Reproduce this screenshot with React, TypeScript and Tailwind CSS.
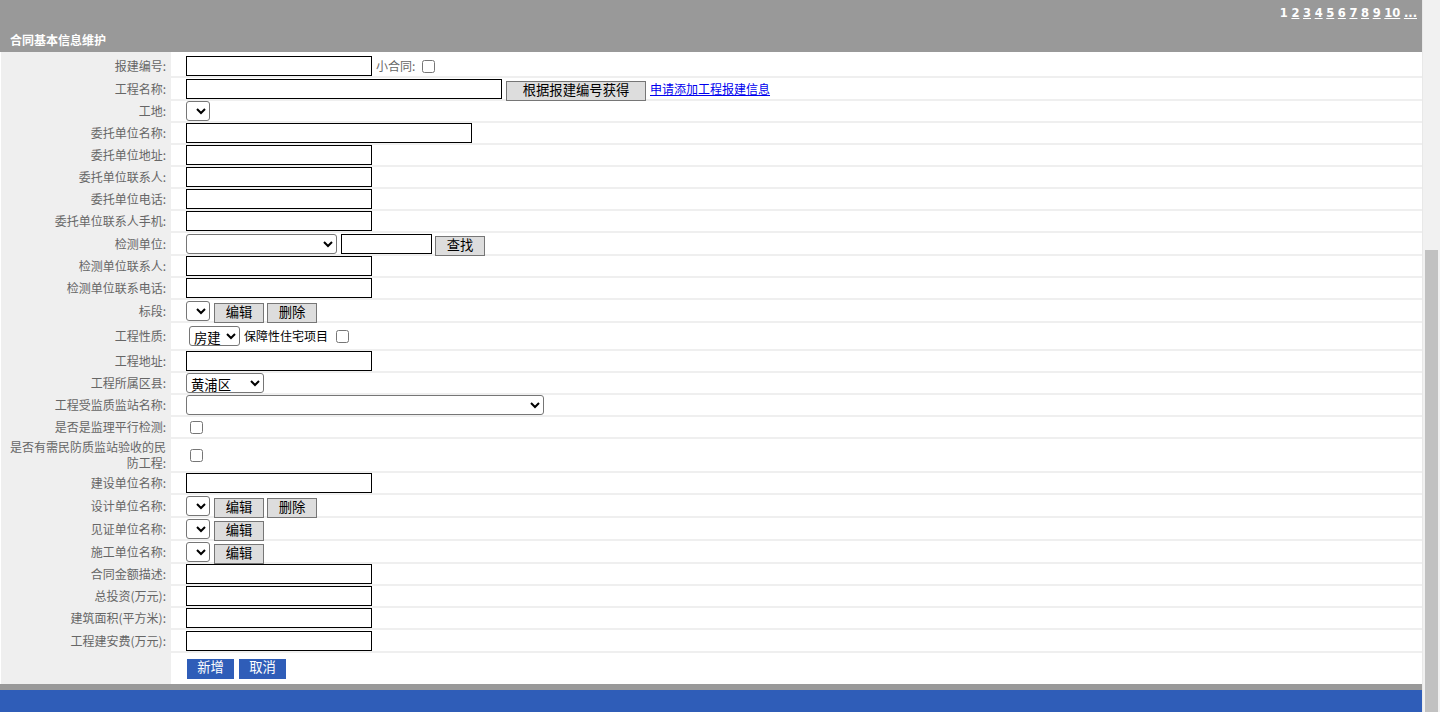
import type { ReactNode } from "react";

const cjk = "font-['Noto_Sans_CJK_SC','Noto_Sans',sans-serif]";

function TextBox({ w = "w-[186px]" }: { w?: string }) {
  return <input type="text" className={`h-[20px] ${w} border border-black bg-white px-[2px] text-[13.33px]`} />;
}

function Select({ w = "w-[24px]", children }: { w?: string; children?: ReactNode }) {
  return (
    <select className={`h-[20px] ${w} rounded-[3px] border border-[#767676] bg-white text-[13.33px] text-black`}>
      {children}
    </select>
  );
}

function GrayButton({ w = "w-[50px]", children }: { w?: string; children: ReactNode }) {
  return (
    <button className={`h-[20px] ${w} border border-[#767676] bg-[#dddddd] pb-[3px] text-[13.33px] leading-none text-black`}>
      {children}
    </button>
  );
}

function Check({ ml = "ml-[4px]" }: { ml?: string }) {
  return <input type="checkbox" className={`${ml} h-[13px] w-[13px]`} />;
}

function Row({ label, h, pt = "", children }: { label: ReactNode; h: string; pt?: string; children?: ReactNode }) {
  return (
    <div className={`flex ${h}`}>
      <div className={`flex w-[170px] items-center justify-end pr-[5px] text-right text-[12px] leading-[16px] text-[#666666] ${pt}`}>
        {label}
      </div>
      <div className={`flex flex-1 items-center bg-white pl-[15px] ${pt}`}>{children}</div>
    </div>
  );
}

export default function App() {
  const pages = ["2", "3", "4", "5", "6", "7", "8", "9", "10", "..."];
  return (
    <div className={`flex h-[712px] w-[1440px] overflow-hidden bg-white ${cjk}`}>
      <div className="flex w-[1422px] flex-col">
        <div className="h-[52px] bg-[#999999]">
          <div className="flex h-[27px] items-center justify-end pr-[5px] font-['DejaVu_Sans',sans-serif] text-[11.5px] font-bold text-white">
            <span>1</span>
            {pages.map((p) => (
              <span key={p} className="ml-[3.6px] underline">
                {p}
              </span>
            ))}
          </div>
          <div className="flex h-[25px] items-center pl-[10px] text-[12px] font-bold text-white">合同基本信息维护</div>
        </div>

        <div className="flex flex-col gap-[2px] border-l border-white bg-[#efefef]">
          <Row label="报建编号:" h="h-[24px]" pt="pt-[4px]">
            <TextBox />
            <span className="ml-[4px] text-[12px] text-[#666666]">小合同:</span>
            <Check ml="ml-[7px]" />
          </Row>
          <Row label="工程名称:" h="h-[21px]">
            <TextBox w="w-[316px]" />
            <span className="ml-[4px]">
              <GrayButton w="w-[140px]">根据报建编号获得</GrayButton>
            </span>
            <a href="#" className="ml-[4px] text-[12px] text-[#0000ee] underline">
              申请添加工程报建信息
            </a>
          </Row>
          <Row label="工地:" h="h-[20px]">
            <Select />
          </Row>
          <Row label="委托单位名称:" h="h-[20px]">
            <TextBox w="w-[286px]" />
          </Row>
          <Row label="委托单位地址:" h="h-[20px]">
            <TextBox />
          </Row>
          <Row label="委托单位联系人:" h="h-[20px]">
            <TextBox />
          </Row>
          <Row label="委托单位电话:" h="h-[20px]">
            <TextBox />
          </Row>
          <Row label="委托单位联系人手机:" h="h-[20px]">
            <TextBox />
          </Row>
          <Row label="检测单位:" h="h-[21px]">
            <Select w="w-[151px]" />
            <span className="ml-[4px] flex">
              <TextBox w="w-[91px]" />
            </span>
            <span className="ml-[3px]">
              <GrayButton>查找</GrayButton>
            </span>
          </Row>
          <Row label="检测单位联系人:" h="h-[20px]">
            <TextBox />
          </Row>
          <Row label="检测单位联系电话:" h="h-[20px]">
            <TextBox />
          </Row>
          <Row label="标段:" h="h-[21px]">
            <Select />
            <span className="ml-[4px]">
              <GrayButton>编辑</GrayButton>
            </span>
            <span className="ml-[3px]">
              <GrayButton>删除</GrayButton>
            </span>
          </Row>
          <Row label="工程性质:" h="h-[26px]">
            <span className="ml-[3px] flex">
              <Select w="w-[51px]">
                <option>房建</option>
              </Select>
            </span>
            <span className="ml-[4px] text-[12px] text-black">保障性住宅项目</span>
            <Check ml="ml-[8px]" />
          </Row>
          <Row label="工程地址:" h="h-[20px]">
            <TextBox />
          </Row>
          <Row label="工程所属区县:" h="h-[20px]">
            <Select w="w-[78px]">
              <option>黄浦区</option>
            </Select>
          </Row>
          <Row label="工程受监质监站名称:" h="h-[20px]">
            <Select w="w-[358px]" />
          </Row>
          <Row label="是否是监理平行检测:" h="h-[20px]">
            <Check />
          </Row>
          <Row label="是否有需民防质监站验收的民防工程:" h="h-[32px]">
            <Check />
          </Row>
          <Row label="建设单位名称:" h="h-[20px]">
            <TextBox />
          </Row>
          <Row label="设计单位名称:" h="h-[21px]">
            <Select />
            <span className="ml-[4px]">
              <GrayButton>编辑</GrayButton>
            </span>
            <span className="ml-[3px]">
              <GrayButton>删除</GrayButton>
            </span>
          </Row>
          <Row label="见证单位名称:" h="h-[21px]">
            <Select />
            <span className="ml-[4px]">
              <GrayButton>编辑</GrayButton>
            </span>
          </Row>
          <Row label="施工单位名称:" h="h-[21px]">
            <Select />
            <span className="ml-[4px]">
              <GrayButton>编辑</GrayButton>
            </span>
          </Row>
          <Row label="合同金额描述:" h="h-[20px]">
            <TextBox />
          </Row>
          <Row label="总投资(万元):" h="h-[20px]">
            <TextBox />
          </Row>
          <Row label="建筑面积(平方米):" h="h-[20px]">
            <TextBox />
          </Row>
          <Row label="工程建安费(万元):" h="h-[21px]">
            <TextBox />
          </Row>
          <Row label="" h="h-[31px]">
            <button className="ml-px h-[20px] w-[47px] bg-[#2f5db8] pb-[3px] text-[13.33px] leading-none text-white">新增</button>
            <button className="ml-[5px] h-[20px] w-[47px] bg-[#2f5db8] pb-[3px] text-[13.33px] leading-none text-white">取消</button>
          </Row>
        </div>

        <div className="h-[6px] bg-[#999999]" />
        <div className="flex-1 bg-[#2f5db8]" />
      </div>

      <div className="w-[18px] border-l border-[#e8e8e8] bg-[#f1f1f1] pl-[2px] pt-[250px]">
        <div className="h-full w-[13px] bg-[#c1c1c1]" />
      </div>
    </div>
  );
}
